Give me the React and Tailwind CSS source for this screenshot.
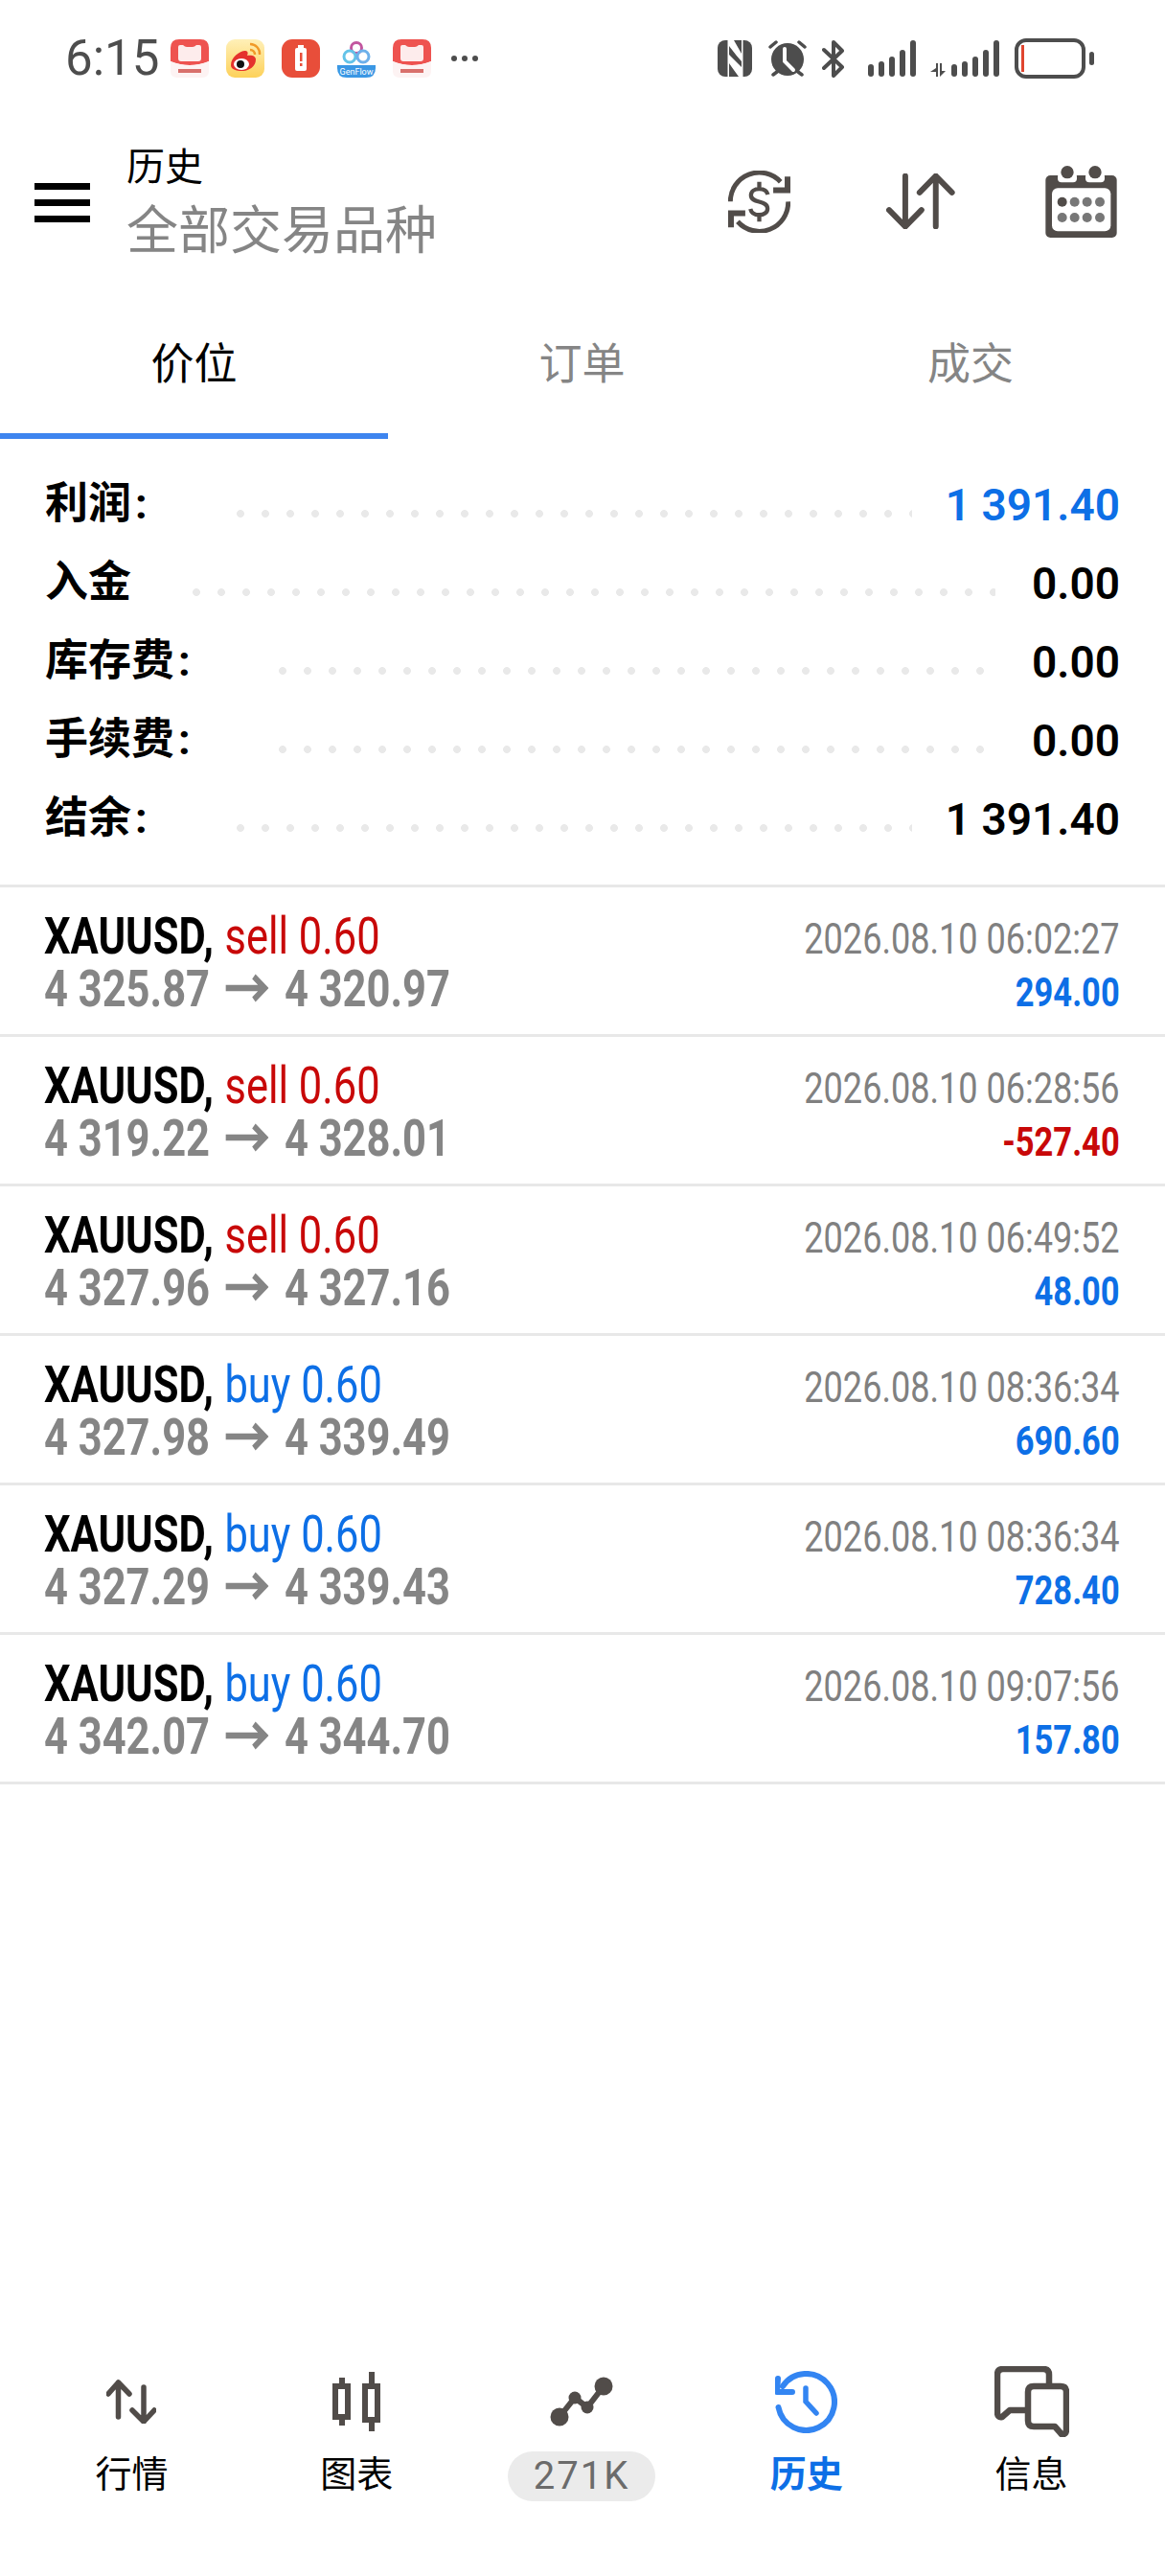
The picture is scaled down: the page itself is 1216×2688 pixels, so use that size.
const FONT = "font-['Roboto','Noto_Sans_CJK_SC',sans-serif]";

const summary = [
  { label: "利润", colon: true, value: "1 391.40", blue: true, dots: "ml-[93px] mr-[35px]" },
  { label: "入金", value: "0.00", dots: "ml-[64px] mr-[38px]" },
  { label: "库存费", colon: true, value: "0.00", dots: "ml-[92px] mr-[50px]" },
  { label: "手续费", colon: true, value: "0.00", dots: "ml-[92px] mr-[50px]" },
  { label: "结余", colon: true, value: "1 391.40", dots: "ml-[93px] mr-[35px]" },
];

const deals = [
  { side: "sell", from: "4 325.87", to: "4 320.97", time: "2026.08.10 06:02:27", profit: "294.00" },
  { side: "sell", from: "4 319.22", to: "4 328.01", time: "2026.08.10 06:28:56", profit: "-527.40" },
  { side: "sell", from: "4 327.96", to: "4 327.16", time: "2026.08.10 06:49:52", profit: "48.00" },
  { side: "buy", from: "4 327.98", to: "4 339.49", time: "2026.08.10 08:36:34", profit: "690.60" },
  { side: "buy", from: "4 327.29", to: "4 339.43", time: "2026.08.10 08:36:34", profit: "728.40" },
  { side: "buy", from: "4 342.07", to: "4 344.70", time: "2026.08.10 09:07:56", profit: "157.80" },
];

const DARK = "#4d4d4d";
const ICON = "#514c49";

const RedBook = () => (
  <svg width="40" height="40" viewBox="0 0 40 40">
    <path d="M9 0h22q9 0 9 9v14q-10 4-20 4T0 23V9q0-9 9-9z" fill="#ee5350" />
    <path d="M10 6h3q2 2 4 2h6q2 0 4-2h3q2 0 2 2v12q0 3-3 3H11q-3 0-3-3V8q0-2 2-2z" fill="#fdecec" />
    <path d="M0 23q10 4 20 4t20-4v10q0 7-7 7H7q-7 0-7-7z" fill="#fdf3f3" />
    <rect x="8" y="31" width="24" height="4" fill="#d8706c" />
  </svg>
);

const SignalBars = () => (
  <div className="flex items-end gap-[5px] h-[38px]">
    <span className="w-[6px] h-[13px] rounded-full bg-[#4d4d4d]" />
    <span className="w-[6px] h-[16px] rounded-full bg-[#4d4d4d]" />
    <span className="w-[6px] h-[21px] rounded-full bg-[#4d4d4d]" />
    <span className="w-[6px] h-[28px] rounded-full bg-[#4d4d4d]" />
    <span className="w-[6px] h-[38px] rounded-full bg-[#4d4d4d]" />
  </div>
);

const StatusBar = () => (
  <div className="h-[150px] flex items-start justify-between pt-[40px] pl-[68px] pr-[74px]">
    <div className="flex items-center h-[42px]">
      <span className="text-[51px] leading-[42px] w-[110px] text-[#4d4d4d]">6:15</span>
      <div className="flex items-center gap-[18px]">
        <RedBook />
        <svg width="40" height="40" viewBox="0 0 40 40">
          <defs>
            <linearGradient id="wb" x1="0" y1="0" x2="0" y2="1">
              <stop offset="0" stopColor="#fff0b8" />
              <stop offset="1" stopColor="#fdd15a" />
            </linearGradient>
          </defs>
          <rect width="40" height="40" rx="9" fill="url(#wb)" />
          <path d="M5 27c0-8 9-15 15-15 3 0 3 3 2 5 4-1 9 0 9 4 0 8-8 12-14 12-7 0-12-2-12-6z" fill="#e5322d" />
          <ellipse cx="16" cy="26" rx="8" ry="6" fill="#fff" />
          <circle cx="15" cy="26" r="4" fill="#111" />
          <path d="M25 5a10 10 0 0 1 10 11M25 11a5 5 0 0 1 5 5" stroke="#f19a28" strokeWidth="2.4" fill="none" />
        </svg>
        <svg width="40" height="40" viewBox="0 0 40 40">
          <rect width="40" height="40" rx="11" fill="#e84e3a" />
          <rect x="14" y="9" width="12" height="24" rx="2" fill="#fff" />
          <rect x="17" y="6" width="6" height="3" fill="#fff" />
          <rect x="19" y="14" width="2.5" height="9" fill="#e84e3a" />
          <rect x="19" y="25" width="2.5" height="3" fill="#e84e3a" />
        </svg>
        <svg width="40" height="40" viewBox="0 0 40 40">
          <circle cx="20" cy="9" r="5.5" fill="none" stroke="#c2569f" strokeWidth="3" />
          <circle cx="13" cy="18" r="6" fill="none" stroke="#63c3e8" strokeWidth="3" />
          <circle cx="27" cy="18" r="6" fill="none" stroke="#6db0ea" strokeWidth="3" />
          <path d="M0 27h40v3q0 10-10 10H10Q0 40 0 30z" fill="#3a97e4" />
          <text x="20" y="37" textAnchor="middle" fontSize="9" fill="#fff" fontFamily="Roboto">GenFlow</text>
        </svg>
        <RedBook />
        <div className="flex gap-[5px] ml-[3px]">
          <span className="w-[6px] h-[6px] rounded-full bg-[#4d4d4d]" />
          <span className="w-[6px] h-[6px] rounded-full bg-[#4d4d4d]" />
          <span className="w-[6px] h-[6px] rounded-full bg-[#4d4d4d]" />
        </div>
      </div>
    </div>
    <div className="flex items-center h-[42px]">
      <svg width="36" height="38" viewBox="0 0 36 38">
        <rect width="36" height="38" rx="8" fill={DARK} />
        <rect x="10.5" y="0" width="1.5" height="38" fill="#fff" />
        <rect x="25" y="0" width="1.5" height="38" fill="#fff" />
        <path d="M12 0h5l8 14v9L12 6zM12 15l13 13v10h-3L12 24z" fill="#fff" />
        <path d="M12 8l13 14v4L12 13z" fill={DARK} />
      </svg>
      <svg width="40" height="38" viewBox="0 0 40 38" className="ml-[17px]">
        <circle cx="20" cy="20" r="17" fill={DARK} />
        <path d="M17 9v13l9 9" stroke="#fff" strokeWidth="4" fill="none" strokeLinecap="round" />
        <path d="M2 7l6-5M38 7l-6-5M5 36l4-3M35 36l-4-3" stroke={DARK} strokeWidth="3.5" strokeLinecap="round" />
      </svg>
      <svg width="24" height="39" viewBox="0 0 24 39" className="ml-[16px]">
        <path d="M2 10l19 18-9 9V2l9 9L2 29" stroke={DARK} strokeWidth="4" fill="none" strokeLinejoin="round" strokeLinecap="round" />
      </svg>
      <div className="ml-[24px]">
        <SignalBars />
      </div>
      <div className="ml-[15px] flex items-end gap-[5px] h-[38px]">
        <svg width="17" height="14" viewBox="0 0 17 14">
          <path d="M6 0v5l-6 4h6v5h2V0zM10 0v14l6-6h-4V0z" fill={DARK} />
        </svg>
        <SignalBars />
      </div>
      <div className="ml-[16px] w-[74px] h-[42px] rounded-[12px] border-[4px] border-[#4d4d4d] flex items-center pl-[3px]">
        <span className="w-[3px] h-[28px] bg-[#e0452f]" />
      </div>
      <span className="ml-[4px] w-[5px] h-[14px] rounded-full bg-[#4d4d4d]" />
    </div>
  </div>
);

const Header = () => (
  <div className="h-[120px] flex items-center">
    <div className="ml-[36px] w-[58px] flex flex-col gap-[10px] mt-[2px]">
      <span className="h-[7px] bg-black" />
      <span className="h-[7px] bg-black" />
      <span className="h-[7px] bg-black" />
    </div>
    <div className="ml-[38px] self-start pt-[1px] flex flex-col">
      <span className="text-[40px] leading-[48px] text-black">历史</span>
      <span className="text-[54px] leading-[86px] text-[#858585]">全部交易品种</span>
    </div>
    <div className="ml-auto mr-[50px] flex items-center">
      <svg width="65" height="65" viewBox="0 0 196 195">
        <path d="M7 97A91 91 0 0 1 165 35M189 97A91 91 0 0 1 30 160" stroke={ICON} strokeWidth="15" fill="none" />
        <path d="M178 18h18v52h-54V52h36zM0 178h18v-35h36v-18H0z" fill={ICON} />
        <path d="M125 75c-3-13-14-18-27-18-15 0-26 8-26 20 0 27 52 14 52 42 0 12-12 20-26 20-14 0-25-7-28-19M98 35v22M98 139v21" stroke={ICON} strokeWidth="13" fill="none" />
      </svg>
      <svg width="72" height="58" viewBox="0 0 215 175" className="ml-[100px]">
        <path d="M59 8v159M8 115l51 52 51-52M155 167V8M104 60l51-52 51 52" stroke={ICON} strokeWidth="18" fill="none" strokeLinecap="round" strokeLinejoin="round" />
      </svg>
      <svg width="75" height="75" viewBox="0 0 223 225" className="ml-[94px]">
        <rect y="30" width="223" height="195" rx="15" fill={ICON} />
        <rect x="38" y="22" width="60" height="30" rx="12" fill="#fff" />
        <rect x="125" y="22" width="60" height="30" rx="12" fill="#fff" />
        <rect x="38" y="0" width="60" height="30" fill="#fff" />
        <rect x="125" y="0" width="60" height="30" fill="#fff" />
        <circle cx="68" cy="20" r="20" fill={ICON} />
        <circle cx="155" cy="20" r="20" fill={ICON} />
        <rect x="20" y="70" width="184" height="135" rx="18" fill="#fff" />
        <g fill="#777">
          <circle cx="52" cy="113" r="15" fill={ICON} />
          <circle cx="91" cy="113" r="15" />
          <circle cx="130" cy="113" r="15" />
          <circle cx="170" cy="113" r="15" />
          <circle cx="52" cy="162" r="15" />
          <circle cx="91" cy="162" r="15" />
          <circle cx="130" cy="162" r="15" />
          <circle cx="170" cy="162" r="15" />
        </g>
      </svg>
    </div>
  </div>
);

const Tabs = () => (
  <div className="flex h-[188px] text-[45px] leading-[60px]">
    <div className="w-[405px] border-b-[6px] border-[#3e85ef] flex justify-center pl-[-2px] pt-[81px] text-black">价位</div>
    <div className="w-[405px] flex justify-center pt-[81px] text-[#858585]">订单</div>
    <div className="w-[406px] flex justify-center pt-[81px] text-[#858585]">成交</div>
  </div>
);

const Summary = () => (
  <div className="pt-[27px] pb-[28px] px-[47px] border-b-[3px] border-[#e8e8e8]">
    {summary.map((row) => (
      <div key={row.label} className="h-[82px] flex items-center whitespace-nowrap">
        <span className="text-[45px] font-bold text-black">
          {row.label}
          {row.colon && <span className="ml-[4px]">:</span>}
        </span>
        <span className={`flex-1 mt-[20px] h-[8px] bg-[radial-gradient(circle_at_4px_4px,#e9e9e9_3.6px,transparent_4.2px)] bg-[length:26px_8px] ${row.dots}`} />
        <span className={`text-[46px] font-semibold pt-[2px] ${row.blue ? "text-[#0d6fe6]" : "text-black"}`}>{row.value}</span>
      </div>
    ))}
  </div>
);

const DealArrow = () => (
  <svg width="55" height="30" viewBox="0 0 55 30" className="inline-block mx-[20px] align-[4px]">
    <path d="M0 15h50M36 3l14 12-14 12" stroke="#858585" strokeWidth="6.5" fill="none" />
  </svg>
);

const DealRow = ({ deal }) => {
  const loss = deal.profit.startsWith("-");
  return (
    <div className="h-[156px] pl-[46px] pr-[47px] flex justify-between border-b-[3px] border-[#e8e8e8]">
      <div className="pt-[24px] origin-left scale-x-[0.82] whitespace-nowrap">
        <div className="text-[53px] leading-[55px]">
          <span className="font-bold text-black">XAUUSD,</span>
          <span className={`ml-[14px] ${deal.side === "sell" ? "text-[#c80808]" : "text-[#0d6fe6]"}`}>{deal.side} 0.60</span>
        </div>
        <div className="text-[53px] leading-[55px] font-bold text-[#858585]">
          {deal.from}
          <DealArrow />
          {deal.to}
        </div>
      </div>
      <div className="pt-[31px] origin-right scale-x-[0.82] text-right whitespace-nowrap">
        <div className="text-[44px] leading-[46px] text-[#808080]">{deal.time}</div>
        <div className={`text-[42px] leading-[66px] font-bold ${loss ? "text-[#c80808]" : "text-[#0d6fe6]"}`}>{deal.profit}</div>
      </div>
    </div>
  );
};

const BottomNav = () => (
  <div className="mt-auto mb-[76px] grid grid-cols-5 pl-[20px] pr-[22px] text-[38px] leading-[60px]">
    <div className="flex flex-col items-center">
      <div className="h-[84px] flex items-center">
        <svg width="52" height="46" viewBox="0 0 52 46">
          <path d="M12.5 39V3M2 15L12.5 3 24 15M39 8v36M27 32l12 12 11-12" stroke={ICON} strokeWidth="5.5" fill="none" strokeLinecap="round" strokeLinejoin="round" />
        </svg>
      </div>
      <span className="text-black mt-[4px]">行情</span>
    </div>
    <div className="flex flex-col items-center">
      <div className="h-[84px] flex items-center">
        <svg width="50" height="62" viewBox="0 0 50 62">
          <path d="M7 6h6v6H7zM7 50h6v6H7zM38 0h6v12h-6zM38 53h6v9h-6z" fill={ICON} />
          <rect x="3" y="15" width="13" height="32" fill="none" stroke={ICON} strokeWidth="6" />
          <rect x="34" y="15" width="13" height="35" fill="none" stroke={ICON} strokeWidth="6" />
        </svg>
      </div>
      <span className="text-black mt-[4px]">图表</span>
    </div>
    <div className="flex flex-col items-center">
      <div className="h-[84px] flex items-center">
        <svg width="66" height="52" viewBox="0 0 66 52">
          <path d="M10 42L26 22 39 32 56 10" stroke={ICON} strokeWidth="6" fill="none" />
          <circle cx="10" cy="42" r="9.5" fill={ICON} />
          <circle cx="26" cy="22" r="6.5" fill={ICON} />
          <circle cx="39" cy="32" r="6.5" fill={ICON} />
          <circle cx="56" cy="10" r="9.5" fill={ICON} />
        </svg>
      </div>
      <span className="mt-[10px] w-[154px] h-[52px] rounded-full bg-[#ebebeb] flex items-center justify-center text-[40px] leading-[52px] tracking-[2px] text-[#6b6b6b]">271K</span>
    </div>
    <div className="flex flex-col items-center">
      <div className="h-[84px] flex items-center">
        <svg width="65" height="65" viewBox="0 0 65 65">
          <path d="M3.5 38A29.5 29.5 0 1 0 8 16" stroke="#3385f2" strokeWidth="6" fill="none" strokeLinecap="round" />
          <path d="M3 8L2 22h16" stroke="#3385f2" strokeWidth="6" fill="none" strokeLinecap="round" strokeLinejoin="round" />
          <path d="M32 18v14l11 12" stroke="#3385f2" strokeWidth="5.5" fill="none" strokeLinecap="round" />
        </svg>
      </div>
      <span className="text-[#0d6fe6] font-bold mt-[4px]">历史</span>
    </div>
    <div className="flex flex-col items-center">
      <div className="h-[84px] flex items-center">
        <svg width="78" height="74" viewBox="0 0 78 74">
          <path d="M57 18V9q0-6-6-6H9Q3 3 3 9v39q0 6 5 5l8-7h16" stroke={ICON} strokeWidth="6.5" fill="none" strokeLinejoin="round" />
          <path d="M35 27q0-6 6-6h28q6 0 6 6v39q0 6-5 5l-7-8H41q-6 0-6-6z" stroke={ICON} strokeWidth="6.5" fill="none" strokeLinejoin="round" />
        </svg>
      </div>
      <span className="text-black mt-[4px]">信息</span>
    </div>
  </div>
);

const App = () => (
  <div className={`w-[1216px] h-[2688px] bg-white overflow-hidden flex flex-col ${FONT}`}>
    <StatusBar />
    <Header />
    <Tabs />
    <Summary />
    {deals.map((deal) => (
      <DealRow key={deal.time + deal.from} deal={deal} />
    ))}
    <BottomNav />
  </div>
);

export default App;
